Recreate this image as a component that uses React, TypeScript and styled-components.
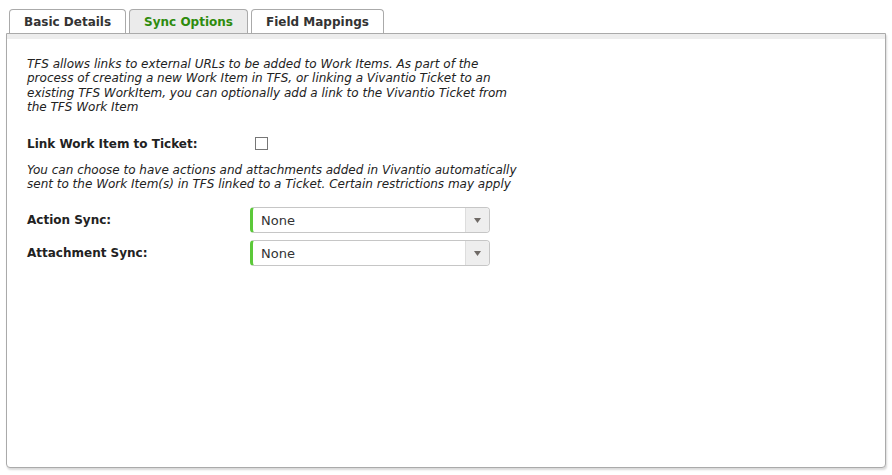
import styled, { createGlobalStyle } from 'styled-components'

const GlobalStyle = createGlobalStyle`
  html, body {
    margin: 0;
    padding: 0;
    background: #ffffff;
  }
  body {
    font-family: "DejaVu Sans", Verdana, sans-serif;
    color: #222222;
  }
`

const tabs = ['Basic Details', 'Sync Options', 'Field Mappings']

const Select = ({ value }: { value: string }) => (
  <SelectBox>
    <SelectValue>{value}</SelectValue>
    <SelectArrow>
      <svg width="7" height="5" viewBox="0 0 7 5">
        <path d="M0 0 L7 0 L3.5 5 Z" fill="#6f6a66" />
      </svg>
    </SelectArrow>
  </SelectBox>
)

export default function App() {
  return (
    <Root>
      <GlobalStyle />
      <TabBar>
        {tabs.map((t) => (
          <Tab key={t} $active={t === 'Sync Options'}>
            {t}
          </Tab>
        ))}
      </TabBar>
      <Panel>
        <Band />
        <Content>
          <Note>
            TFS allows links to external URLs to be added to Work Items. As part of the
            <br />
            process of creating a new Work Item in TFS, or linking a Vivantio Ticket to an
            <br />
            existing TFS WorkItem, you can optionally add a link to the Vivantio Ticket from
            <br />
            the TFS Work Item
          </Note>
          <CheckRow>
            <Label>Link Work Item to Ticket:</Label>
            <CheckBox />
          </CheckRow>
          <Note>
            You can choose to have actions and attachments added in Vivantio automatically
            <br />
            sent to the Work Item(s) in TFS linked to a Ticket. Certain restrictions may apply
          </Note>
          <Fields>
            <FieldRow>
              <Label>Action Sync:</Label>
              <Select value="None" />
            </FieldRow>
            <FieldRow>
              <Label>Attachment Sync:</Label>
              <Select value="None" />
            </FieldRow>
          </Fields>
        </Content>
      </Panel>
    </Root>
  )
}

const Root = styled.div`
  width: 892px;
  height: 475px;
  padding: 9px 6px 0 6px;
  box-sizing: border-box;
  display: flex;
  flex-direction: column;
`

const TabBar = styled.div`
  display: flex;
  gap: 3px;
  padding-left: 3px;
  height: 24px;
`

const Tab = styled.div<{ $active?: boolean }>`
  height: 24px;
  box-sizing: border-box;
  padding: 0 14px;
  display: flex;
  align-items: center;
  border: 1px solid #aaaaaa;
  border-bottom: none;
  border-radius: 4px 4px 0 0;
  background: ${(p) => (p.$active ? '#ebebeb' : '#ffffff')};
  color: ${(p) => (p.$active ? '#2e8b0e' : '#333333')};
  font-size: 12px;
  font-weight: bold;
`

const Panel = styled.div`
  width: 880px;
  height: 435px;
  box-sizing: border-box;
  border: 1px solid #aaaaaa;
  border-radius: 0 0 4px 4px;
  box-shadow: 1px 2px 2px rgba(0, 0, 0, 0.15);
  background: #ffffff;
  display: flex;
  flex-direction: column;
`

const Band = styled.div`
  height: 5px;
  background: #ededed;
`

const Content = styled.div`
  padding: 18px 20px;
  display: flex;
  flex-direction: column;
`

const Note = styled.p`
  margin: 0;
  font-size: 12px;
  line-height: 14.4px;
  font-style: italic;
  color: #222222;
`

const Label = styled.div`
  width: 223px;
  font-size: 12px;
  font-weight: bold;
  color: #222222;
`

const CheckRow = styled.div`
  display: flex;
  align-items: center;
  margin: 22px 0 12px;
`

const CheckBox = styled.div`
  width: 11px;
  height: 11px;
  margin-left: 5px;
  border: 1px solid #767676;
  background: #ffffff;
`

const Fields = styled.div`
  display: flex;
  flex-direction: column;
  gap: 7px;
  margin-top: 16px;
`

const FieldRow = styled.div`
  display: flex;
  align-items: center;
`

const SelectBox = styled.div`
  width: 240px;
  height: 26px;
  box-sizing: border-box;
  display: flex;
  border: 1px solid #c6c6c6;
  border-left: 3px solid #5cc93a;
  border-radius: 4px;
  background: #ffffff;
  overflow: hidden;
`

const SelectValue = styled.div`
  flex: 1;
  display: flex;
  align-items: center;
  padding-left: 8px;
  font-size: 13px;
  color: #333333;
`

const SelectArrow = styled.div`
  width: 23px;
  display: flex;
  align-items: center;
  justify-content: center;
  background: #eeeeee;
  border-left: 1px solid #dddddd;
`
